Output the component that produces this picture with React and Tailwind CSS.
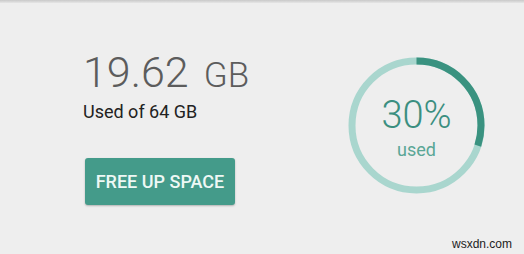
import React from 'react';

const StorageRing = ({ percent }) => {
  const r = 64.5;
  const c = 2 * Math.PI * r;
  return (
    <div className="grid w-[137px] h-[137px] mt-[54px] mr-[39px] ml-auto">
      <svg width="137" height="137" viewBox="0 0 137 137" className="col-start-1 row-start-1">
        <circle cx="68.5" cy="68.5" r={r} fill="none" stroke="#a9d6ce" strokeWidth="7" />
        <circle
          cx="68.5"
          cy="68.5"
          r={r}
          fill="none"
          stroke="#3a9280"
          strokeWidth="7"
          strokeDasharray={`${(c * percent) / 100} ${c}`}
          transform="rotate(-90 68.5 68.5)"
        />
      </svg>
      <div className="col-start-1 row-start-1 flex flex-col items-center pt-[39px]">
        <span className="text-[38px] leading-none font-light text-[#3b8f80]">{percent}%</span>
        <span className="mt-[7px] text-[18px] leading-none text-[#5aa696]">used</span>
      </div>
    </div>
  );
};

export default function App() {
  return (
    <div className="relative w-[524px] h-[254px] overflow-hidden bg-[#eeeeee] font-['Roboto',sans-serif]">
      <div className="h-[3px] bg-gradient-to-b from-[#c9c9c9] to-[#e6e6e6]" />
      <div className="flex items-start">
        <div className="flex flex-col items-start pl-[83px] pt-[48px]">
          <div className="flex items-baseline text-[#5c5c5c]">
            <span className="text-[43px] leading-none font-light">19.62</span>
            <span className="ml-[15px] text-[35px] leading-none font-light">GB</span>
          </div>
          <p className="mt-[9px] text-[18px] leading-none text-[#222222]">Used of 64 GB</p>
          <button className="mt-[37px] ml-[2px] w-[150px] h-[47px] rounded-[3px] bg-[#449b8a] text-[18px] font-medium text-[#eef8f5] shadow-[0_1px_2px_rgba(0,0,0,0.25)]">
            FREE UP SPACE
          </button>
        </div>
        <StorageRing percent={30} />
      </div>
      <span className="absolute right-[12px] bottom-[4px] text-[12px] leading-none text-[#1c1c1c] font-['Liberation_Sans',sans-serif]">
        wsxdn.com
      </span>
    </div>
  );
}
